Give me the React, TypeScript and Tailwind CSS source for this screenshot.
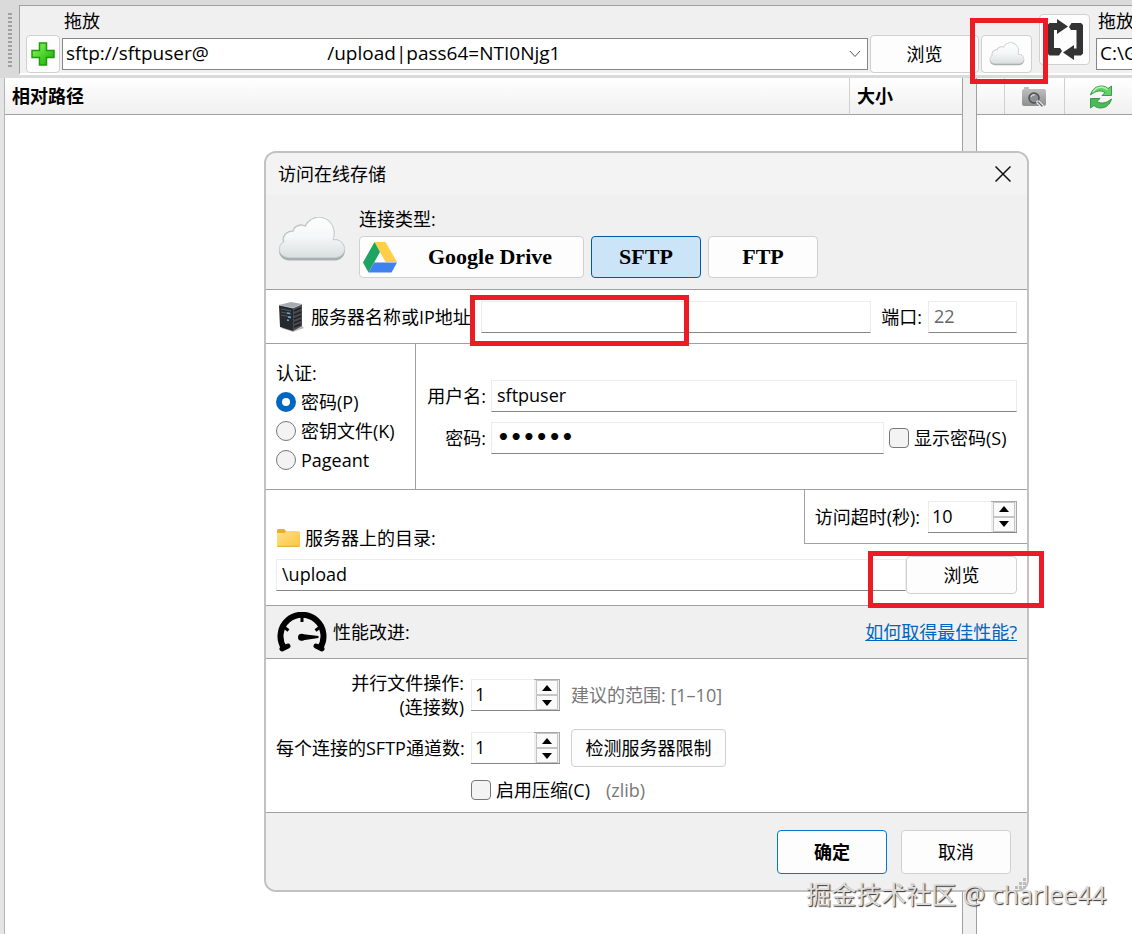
import { useState } from 'react'
import type { ReactNode } from 'react'

const uploadUrl = 'sftp://sftpuser@' + ' '.repeat(24) + '/upload|pass64=NTI0Njg1'

const BUTTON = 'shrink-0 rounded border border-[#d0d0d0] bg-[#fdfdfd]'
const FIELD =
  'h-8 min-w-0 border border-[#ececec] border-b-[#868686] bg-white px-[5px] pb-0.5 focus:outline-none'

// ── Icons ─────────────────────────────────────────────────────────────────────

function PlusIcon() {
  return (
    <svg width="24" height="24" viewBox="0 0 24 24" aria-hidden="true">
      <defs>
        <linearGradient id="plus" x1="0" y1="0" x2="1" y2="1">
          <stop offset="0" stopColor="#8dff5a" />
          <stop offset="1" stopColor="#14a800" />
        </linearGradient>
      </defs>
      <path d="M8.500 1h7v7.500H23v7h-7.500V23h-7v-7.500H1v-7h7.500z" fill="url(#plus)" stroke="#1c9a10" strokeWidth="1.500" />
    </svg>
  )
}

function CloudIcon({ className, id }: { className: string; id: string }) {
  return (
    <svg className={className} viewBox="0 0 68 46" aria-hidden="true">
      <defs>
        <linearGradient id={id} x1="0" y1="0" x2="0" y2="1">
          <stop offset="0" stopColor="#ffffff" />
          <stop offset="0.5" stopColor="#f4f7f7" />
          <stop offset="1" stopColor="#d9dfdf" />
        </linearGradient>
      </defs>
      <path
        d="M12 44.500C5 44.500 1 40 1 34.500c0-5 2-7.500 4-8.500C3 19 10 14 15 14.500 15.500 10 22 7 27 9.500 30 4 35 1 41 1c9 0 15.500 7 15.500 16 0 3-.5 5-1 6.500C62 22 67 28 67 34c0 6-4.500 10.500-10 10.500z"
        fill="#a9aeae"
      />
      <path
        d="M12 41.500C5.500 41.500 1.500 38 1.500 33.500c0-4.500 2-6.500 4.500-7.500C4 19 10.500 15 15.500 15.500 16 10.500 22.500 8 27.500 10.500 30 5 35 1.500 41 1.500c9 0 15 7 15 15.500 0 3-.5 5-1 7C61.500 22.500 66.500 28 66.500 33c0 5-4.500 8.500-10 8.500z"
        fill={`url(#${id})`}
        stroke="#cdd2d2"
        strokeWidth="0.800"
      />
    </svg>
  )
}

function SyncIcon() {
  return (
    <svg width="38" height="42" viewBox="0 0 38 42" fill="#333" aria-hidden="true">
      <path d="M1.500 6l2-2H11V0l11 7.500L11 15v-4H8v18h6l2 3-3 4.500H3.500l-2-2z" />
      <path d="M37 34.500l-2 2h-7V41l-11-7.500L28 26v3.500h2.500V11H25l-2-3 2.500-4H35l2 2z" />
    </svg>
  )
}

function CameraIcon() {
  return (
    <svg width="25" height="21" viewBox="0 0 25 21" aria-hidden="true">
      <defs>
        <linearGradient id="camera" x1="0" y1="0" x2="0" y2="1">
          <stop offset="0" stopColor="#c4c4c4" />
          <stop offset="1" stopColor="#8e8e8e" />
        </linearGradient>
      </defs>
      <path d="M2 2V0h5v2h15q2 0 2 2v13q0 2-2 2H2q-2 0-2-2V4q0-2 2-2z" fill="url(#camera)" />
      <circle cx="12" cy="11" r="5" fill="#8b8f93" stroke="#4e4e4e" strokeWidth="1.500" />
      <path d="M9 10a3 3 0 0 1 4-2" fill="none" stroke="#d6d6d6" strokeWidth="1.200" />
      <path d="M16 15l4 4" stroke="#f4f4f4" strokeWidth="3.500" strokeLinecap="round" />
      <path d="M16 15l4 4" stroke="#666" strokeWidth="1.400" strokeLinecap="round" />
    </svg>
  )
}

function RefreshIcon() {
  return (
    <svg width="24" height="24" viewBox="0 0 24 24" stroke="#1f8a2c" strokeWidth="0.800" strokeLinejoin="round" aria-hidden="true">
      <path d="M1.500 10C3 4 7.500 1 12.500 1c3 0 5 1 6.500 2.500L22.500 1v9.500H13l3-3C12 5 7 5.500 1.500 10z" fill="#63cf68" />
      <path d="M22.500 14c-1.500 6-6 9-11 9-3 0-5-1-6.500-2.500L1.500 23v-9.500H11l-3 3c4 2.500 9 2 14.500-2.500z" fill="#4dbb55" />
      <path d="M4 7C6.500 3 10 2 13 2.200c2 .1 4 1 5.500 2.500" fill="none" stroke="#b6f0b6" strokeWidth="1.500" />
    </svg>
  )
}

function DriveIcon() {
  return (
    <svg width="34" height="31" viewBox="0 0 34 31" aria-hidden="true">
      <path d="M11.500 0h11L34 20H22.500z" fill="#ffcf48" />
      <path d="M11.500 0l5.500 10L5.500 30.500 0 20.500z" fill="#1da362" />
      <path d="M11.200 20.500H34l-5.500 10h-23z" fill="#4081f0" />
    </svg>
  )
}

function ServerIcon() {
  return (
    <svg width="26" height="30" viewBox="0 0 26 30" aria-hidden="true">
      <path d="M3 26l12 4 11-4-3-3z" fill="#b9b9b9" />
      <path d="M1 3l12-3 11 2-9 4z" fill="#a5abb0" />
      <path d="M1 3l14 3v23L2 25z" fill="#26292d" />
      <path d="M15 6l9-4v22l-9 5z" fill="#484c52" />
      <path d="M3 7l10 2M3 10l10 2M3 13l10 2" stroke="#555c64" />
      <path d="M9 11l3 .5M10 15l3 .5M9 18l2 .4" stroke="#6fa9d8" strokeWidth="1.400" />
      <path d="M16 9l7-3M16 13l7-3M16 17l7-3M16 21l7-3M16 25l7-3" stroke="#202226" strokeWidth="1.400" />
      <path d="M1 3l14 3 9-4" fill="none" stroke="#d0d4d8" strokeWidth="0.700" />
    </svg>
  )
}

function FolderIcon() {
  return (
    <svg width="23" height="18" viewBox="0 0 23 18" aria-hidden="true">
      <defs>
        <linearGradient id="folder" x1="0" y1="0" x2="1" y2="1">
          <stop offset="0" stopColor="#ffe08a" />
          <stop offset="1" stopColor="#fcc63e" />
        </linearGradient>
      </defs>
      <path d="M0 1.500Q0 0 1.500 0H7l2 2h12v4H0z" fill="#e8ae2c" />
      <path d="M0 4h7.500l2-2H21.500Q23 2 23 3.500v13q0 1-1 1H1q-1 0-1-1z" fill="url(#folder)" />
      <path d="M.5 17.300h22" stroke="#dfa62e" />
    </svg>
  )
}

function GaugeIcon() {
  return (
    <svg width="50" height="40" viewBox="0 0 50 40" aria-hidden="true">
      <path d="M7 36A21.500 21.500 0 1 1 43 36" fill="none" stroke="#000" strokeWidth="6" />
      <path d="M5 37l6-3M45 37l-6-3" stroke="#000" strokeWidth="5" strokeLinecap="round" />
      <path d="M25 3v7M11.500 18.500l-4-3M38.500 18.500l4-3" stroke="#000" strokeWidth="3" />
      <path d="M24.500 22l17 2v2l-17 2.500z" />
      <circle cx="24.500" cy="25.200" r="3.500" />
    </svg>
  )
}

// ── Form pieces ───────────────────────────────────────────────────────────────

function Spinner({ id, value, onChange }: { id: string; value: number; onChange: (n: number) => void }) {
  const step = 'flex flex-1 items-center justify-center border border-[#c4c4c4] bg-[#fafafa]'
  return (
    <div className="flex h-8 w-[89px] border-b border-[#868686] bg-white">
      <input
        id={id}
        type="text"
        value={value}
        onChange={(e) => onChange(Number(e.target.value) || 0)}
        className="min-w-0 flex-1 border-t border-l border-[#ececec] bg-transparent px-[3px] pb-0.5 focus:outline-none"
      />
      <div className="flex w-[26px] flex-col border-t border-r border-[#a8a8a8] bg-[#f0f0f0] pr-px pl-0.5">
        <button type="button" aria-label="Increase" onClick={() => onChange(value + 1)} className={step}>
          <svg width="10" height="6" viewBox="0 0 10 6"><path d="M5 0l5 6H0z" /></svg>
        </button>
        <button type="button" aria-label="Decrease" onClick={() => onChange(value - 1)} className={step}>
          <svg width="10" height="6" viewBox="0 0 10 6"><path d="M5 6L0 0h10z" /></svg>
        </button>
      </div>
    </div>
  )
}

function AuthOption({ checked, onSelect, children }: { checked: boolean; onSelect: () => void; children: ReactNode }) {
  return (
    <label className="flex h-[29px] items-center gap-[5px]">
      <input
        type="radio"
        name="auth"
        checked={checked}
        onChange={onSelect}
        className="size-5 appearance-none rounded-full border border-[#777] bg-[#f3f3f3] checked:border-6 checked:border-[#0067c0] checked:bg-white"
      />
      {children}
    </label>
  )
}

function Check({ children }: { children: ReactNode }) {
  return (
    <label className="flex shrink-0 items-center gap-[5px]">
      <input
        type="checkbox"
        className="size-5 appearance-none rounded border border-[#777] bg-[#f3f3f3] checked:bg-[#0067c0]"
      />
      {children}
    </label>
  )
}

// red frame that points out a control
function Mark({ className }: { className: string }) {
  return <div className={`pointer-events-none absolute border-5 border-[#ed1c24] ${className}`} />
}

// ── Main window ───────────────────────────────────────────────────────────────

function Toolbar() {
  return (
    <div className="flex h-[78px] bg-[#dadada] pt-[5px] pb-[3px]">
      <div className="flex w-[19px] justify-center py-2">
        <div className="w-1 border-x-2 border-dotted border-[#a0a0a0]" />
      </div>
      <div className="flex min-w-0 flex-1 items-end border-t border-l border-[#a0a0a0] border-b-2 border-b-white bg-[#f0f0f0] pl-1.5">
        <div className="min-w-0 flex-1">
          <label htmlFor="source" className="block pl-[38px]">拖放</label>
          <div className="flex items-center gap-0.5 pt-0.5">
            <button type="button" aria-label="Add" className={`${BUTTON} flex h-[38px] w-[34px] items-center justify-center`}>
              <PlusIcon />
            </button>
            <div className="flex h-8 min-w-0 flex-1 items-center border border-[#868686] bg-white pr-1.5">
              <input id="source" type="text" defaultValue={uploadUrl} className="min-w-0 flex-1 px-[3px] pb-0.5 text-[19px] focus:outline-none" />
              <button type="button" aria-label="Open list">
                <svg width="12" height="12" viewBox="0 0 12 12" fill="none" stroke="#555"><path d="M1 3l5 5.500L11 3" /></svg>
              </button>
            </div>
            <button type="button" className={`${BUTTON} h-[38px] w-[109px]`}>浏览</button>
            <div className="relative">
              <button type="button" aria-label="Online storage" className={`${BUTTON} flex h-[38px] w-[51px] items-center justify-center`}>
                <CloudIcon id="cloud-small" className="h-6 w-9" />
              </button>
              <Mark className="-top-[17px] -left-[11px] z-10 h-[66px] w-[78px]" />
            </div>
          </div>
        </div>
        <button type="button" aria-label="Swap" className={`${BUTTON} mb-2 ml-[7px] flex h-[51px] w-[51px] items-center justify-center`}>
          <SyncIcon />
        </button>
        <div className="ml-1.5 w-9 shrink-0 overflow-hidden pb-[3px]">
          <label htmlFor="target" className="block w-10 pl-0.5 whitespace-nowrap">拖放</label>
          <input id="target" type="text" defaultValue="C:\Games" className="mt-[5px] h-8 w-40 border border-[#868686] bg-white px-[3px] pb-0.5 text-[19px]" />
        </div>
      </div>
    </div>
  )
}

function Panes() {
  const head = 'h-[37px] border-b border-[#a0a0a0] bg-linear-to-b from-white to-[#f0f0f0]'
  return (
    <div className="flex flex-1">
      <div className="w-[5px] border-r border-[#b4b4b4] bg-[#e4e4e4]" />
      <div className="min-w-0 flex-1">
        <table className="w-full table-fixed border-separate border-spacing-0 text-left">
          <thead>
            <tr>
              <th className={`${head} border-r border-r-[#d0d0d0] pl-[7px]`}>相对路径</th>
              <th className={`${head} w-[112px] pl-[7px]`}>大小</th>
            </tr>
          </thead>
        </table>
      </div>
      <div className="w-[15px] border-x border-[#a0a0a0] bg-[#f0f0f0]" />
      <div className="w-[155px]">
        <div className={`${head} flex`}>
          <div className="w-7 border-r border-[#d0d0d0]" />
          <button type="button" aria-label="Preview" className="flex w-[60px] items-center justify-center border-r border-[#d0d0d0] pt-0.5">
            <CameraIcon />
          </button>
          <button type="button" aria-label="Refresh" className="flex flex-1 items-center pt-0.5 pl-6">
            <RefreshIcon />
          </button>
        </div>
      </div>
    </div>
  )
}

// ── Online storage dialog ─────────────────────────────────────────────────────

function StorageDialog() {
  const [auth, setAuth] = useState('password')
  const [timeout, setTimeoutSec] = useState(10)
  const [parallel, setParallel] = useState(1)
  const [channels, setChannels] = useState(1)

  const kind = 'h-[42px] rounded border font-["Liberation_Serif",serif] text-[22px] font-bold'

  return (
    <div
      role="dialog"
      aria-labelledby="dialog-title"
      className="absolute top-[151px] right-[103px] left-[264px] rounded-xl border-2 border-[#c2c2c2] bg-white"
    >
      <div className="flex h-[42px] items-center justify-between rounded-t-xl bg-[#f3f3f3] pr-4 pl-3">
        <h1 id="dialog-title">访问在线存储</h1>
        <button type="button" aria-label="Close">
          <svg width="16" height="16" viewBox="0 0 16 16" stroke="#111" strokeWidth="1.500"><path d="M.5.5l15 15M15.500.5l-15 15" /></svg>
        </button>
      </div>

      <div className="flex h-[95px] gap-[13px] border-b border-[#a0a0a0] bg-[#f0f0f0] pt-3 pl-3">
        <CloudIcon id="cloud-large" className="mt-[9px] h-[46px] w-[68px]" />
        <div>
          <p>连接类型:</p>
          <div className="mt-[5px] flex gap-[7px]">
            <button type="button" className={`${kind} flex w-[225px] items-center border-[#d0d0d0] bg-[#fdfdfd] pl-[3px]`}>
              <DriveIcon />
              <span className="flex-1">Google Drive</span>
            </button>
            <button type="button" className={`${kind} w-[110px] border-[#005a9e] bg-[#cce4f7]`}>SFTP</button>
            <button type="button" className={`${kind} w-[110px] border-[#d0d0d0] bg-[#fdfdfd]`}>FTP</button>
          </div>
        </div>
      </div>

      <div className="flex h-[54px] items-center border-b border-[#a0a0a0] pr-2.5 pl-3">
        <ServerIcon />
        <label htmlFor="host" className="w-[177px] shrink-0 pl-[7px] whitespace-nowrap">服务器名称或IP地址</label>
        <div className="relative flex min-w-0 flex-1">
          <input id="host" type="text" className={`${FIELD} flex-1`} />
          <Mark className="-top-1.5 -left-[11px] h-[51px] w-[219px]" />
        </div>
        <label htmlFor="port" className="pr-1.5 pl-2.5">端口:</label>
        <input id="port" type="text" defaultValue="22" className={`${FIELD} w-[89px] text-[#666]`} />
      </div>

      <div className="flex h-[146px] border-b border-[#a0a0a0]">
        <fieldset className="w-[150px] border-r border-[#a0a0a0] pt-[17px] pl-2.5">
          <legend className="float-left w-full">认证:</legend>
          <div className="clear-both pt-0.5">
            <AuthOption checked={auth === 'password'} onSelect={() => setAuth('password')}>密码(P)</AuthOption>
            <AuthOption checked={auth === 'key'} onSelect={() => setAuth('key')}>密钥文件(K)</AuthOption>
            <AuthOption checked={auth === 'pageant'} onSelect={() => setAuth('pageant')}>Pageant</AuthOption>
          </div>
        </fieldset>
        <div className="flex flex-1 flex-col gap-2.5 pt-9 pr-2.5 pl-2.5">
          <div className="flex items-center gap-[5px]">
            <label htmlFor="user" className="w-[60px] text-right">用户名:</label>
            <input id="user" type="text" defaultValue="sftpuser" className={`${FIELD} flex-1`} />
          </div>
          <div className="flex items-center gap-[5px]">
            <label htmlFor="password" className="w-[60px] text-right">密码:</label>
            <input
              id="password"
              type="password"
              defaultValue="secret"
              className={`${FIELD} flex-1 font-["DejaVu_Sans",sans-serif] text-xl font-bold`}
            />
            <div className="w-[128px]"><Check>显示密码(S)</Check></div>
          </div>
        </div>
      </div>

      <div className="h-[116px] border-b border-[#a0a0a0]">
        <div className="flex h-[60px] justify-between pl-[11px]">
          <label htmlFor="directory" className="flex items-center gap-[5px] self-end">
            <FolderIcon />
            服务器上的目录:
          </label>
          <div className="flex h-[54px] items-center gap-2 border-b border-l border-[#a0a0a0] pr-2.5 pl-2.5">
            <label htmlFor="timeout">访问超时(秒):</label>
            <Spinner id="timeout" value={timeout} onChange={setTimeoutSec} />
          </div>
        </div>
        <div className="flex items-center px-2.5 pt-1.5">
          <input id="directory" type="text" defaultValue="\upload" className={`${FIELD} flex-1`} />
          <div className="relative">
            <button type="button" className={`${BUTTON} h-[38px] w-[111px]`}>浏览</button>
            <Mark className="-top-[5px] -left-[38px] h-[57px] w-[176px]" />
          </div>
        </div>
      </div>

      <div className="flex h-[53px] items-center border-b border-[#a0a0a0] bg-[#f0f0f0] pr-2.5 pl-[11px]">
        <GaugeIcon />
        <h2 className="flex-1 pl-1.5">性能改进:</h2>
        <a href="#performance" className="text-[#0067c0] underline">如何取得最佳性能?</a>
      </div>

      <div className="grid h-[154px] grid-cols-[184px_89px_1fr] content-start items-center gap-x-[11px] gap-y-2.5 border-b border-[#a0a0a0] pt-3 pl-2.5">
        <label htmlFor="parallel" className="-mr-1 h-12 text-right">并行文件操作:<br />(连接数)</label>
        <Spinner id="parallel" value={parallel} onChange={setParallel} />
        <span className="text-[#777]">建议的范围: [1–10]</span>
        <label htmlFor="channels" className="-mr-1 text-right whitespace-nowrap">每个连接的SFTP通道数:</label>
        <Spinner id="channels" value={channels} onChange={setChannels} />
        <button type="button" className={`${BUTTON} h-[38px] w-[155px]`}>检测服务器限制</button>
        <div className="col-span-2 col-start-2 flex h-[26px] items-center gap-4">
          <Check>启用压缩(C)</Check>
          <span className="text-[#777]">(zlib)</span>
        </div>
      </div>

      <div className="flex h-[77px] items-center justify-end gap-3.5 rounded-b-xl bg-[#f0f0f0] pr-4">
        <button type="button" className="h-11 w-[110px] rounded border border-[#0078d4] bg-[#fdfdfd] font-bold">确定</button>
        <button type="button" className={`${BUTTON} h-11 w-[110px]`}>取消</button>
      </div>
      <svg className="absolute right-0 bottom-0" width="12" height="12" fill="#bcbcbc" aria-hidden="true">
        <path d="M8 0h3v3H8zM4 4h3v3H4zM8 4h3v3H8zM0 8h3v3H0zM4 8h3v3H4zM8 8h3v3H8z" />
      </svg>
    </div>
  )
}

export default function App() {
  return (
    <div className="relative flex min-h-screen flex-col overflow-hidden bg-white font-['Open_Sans','Noto_Sans_CJK_SC',sans-serif] text-lg leading-6 text-black">
      <Toolbar />
      <Panes />
      <StorageDialog />
      <p className="absolute right-[26px] bottom-6 text-[25px] leading-8 text-[#dcdcdc] [text-shadow:1px_1px_1px_#333]">
        掘金技术社区 @ charlee44
      </p>
    </div>
  )
}
